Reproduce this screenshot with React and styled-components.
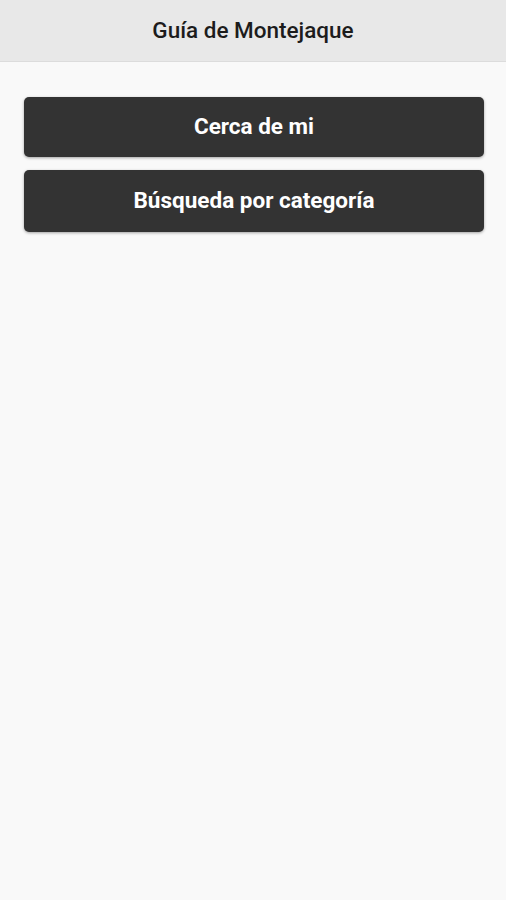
import React from "react";
import styled, { createGlobalStyle } from "styled-components";

const Global = createGlobalStyle`
  html, body { margin: 0; padding: 0; background: #f9f9f9; }
  body { font-family: Roboto, "Noto Sans", sans-serif; }
`;

const Page = styled.div`
  min-height: 900px;
  background: #f9f9f9;
  display: flex;
  flex-direction: column;
`;

const Header = styled.header`
  height: 61px;
  background: #e8e8e8;
  border-bottom: 1px solid #dcdcdc;
  display: flex;
  align-items: center;
  justify-content: center;
`;

const Title = styled.h1`
  margin: 0 0 2px;
  font-size: 22.5px;
  font-weight: 500;
  color: #1c1c1c;
`;

const Menu = styled.main`
  padding: 35px 22px 0 24px;
  display: flex;
  flex-direction: column;
  gap: 13px;
`;

const MenuButton = styled.button`
  height: ${(p) => p.$h}px;
  border: none;
  border-radius: 5px;
  background: #333333;
  color: #ffffff;
  font-family: Roboto, "Noto Sans", sans-serif;
  font-size: 22.5px;
  font-weight: 700;
  padding: 0 0 3px;
  box-shadow: 0 1px 3px rgba(0, 0, 0, 0.35);
  cursor: pointer;
`;

export default function App() {
  return (
    <Page>
      <Global />
      <Header>
        <Title>Guía de Montejaque</Title>
      </Header>
      <Menu>
        <MenuButton $h={60}>Cerca de mi</MenuButton>
        <MenuButton $h={62}>Búsqueda por categoría</MenuButton>
      </Menu>
    </Page>
  );
}
